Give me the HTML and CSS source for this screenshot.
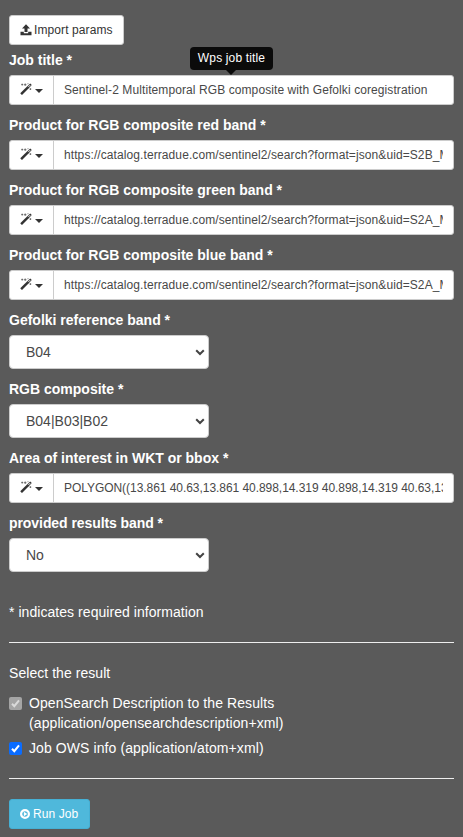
FILE: index.html
```html
<!DOCTYPE html>
<html lang="en">
<head>
<meta charset="utf-8">
<title>Job parameters</title>
<link rel="stylesheet" href="styles.css">
</head>
<body>
<svg class="defs" width="0" height="0" aria-hidden="true">
  <symbol id="wand" viewBox="0 0 12 12">
    <path d="M1.1 11.2 7.9 4.4" stroke="currentColor" stroke-width="2.4"/>
    <path d="M7.7 4.6 11 1.3" stroke="currentColor" stroke-width="2.2"/>
    <path d="M8.3 4 10.3 2" stroke="#fff" stroke-width=".9"/>
    <path d="M2.2.6v2M1.2 1.6h2M5.2.4v2.6M3.9 1.7h2.6M8 .2v1M10.4 5.2v1.8M9.5 6.1h1.8" stroke="currentColor" stroke-width=".6"/>
  </symbol>
  <symbol id="chevron" viewBox="0 0 10 7"><path d="M1.2 1.2 5 5l3.8-3.8" fill="none" stroke="currentColor" stroke-width="2"/></symbol>
</svg>
<form class="job-form">
  <button type="button" class="btn btn-default"><svg class="upload" viewBox="0 0 12 12"><path d="M6 .3 10 4.5H7.5V8h-3V4.5H2zM.5 7.8h3.3v1.4h4.4V7.8h3.3v3.4H.5z" fill="currentColor"/></svg><span class="import-text">Import params</span></button>

  <div class="group">
    <label class="label" for="title">Job title *</label>
    <div class="input-group">
      <button type="button" class="addon"><svg class="wand"><use href="#wand"/></svg><i class="caret"></i></button>
      <input id="title" class="input" value="Sentinel-2 Multitemporal RGB composite with Gefolki coregistration">
      <div class="tooltip">Wps job title</div>
    </div>
  </div>
  <div class="group">
    <label class="label" for="red">Product for RGB composite red band *</label>
    <div class="input-group">
      <button type="button" class="addon"><svg class="wand"><use href="#wand"/></svg><i class="caret"></i></button>
      <input id="red" class="input" value="https://catalog.terradue.com/sentinel2/search?format=json&amp;uid=S2B_MSIL1C">
    </div>
  </div>
  <div class="group">
    <label class="label" for="green">Product for RGB composite green band *</label>
    <div class="input-group">
      <button type="button" class="addon"><svg class="wand"><use href="#wand"/></svg><i class="caret"></i></button>
      <input id="green" class="input" value="https://catalog.terradue.com/sentinel2/search?format=json&amp;uid=S2A_MSIL1C">
    </div>
  </div>
  <div class="group">
    <label class="label" for="blue">Product for RGB composite blue band *</label>
    <div class="input-group">
      <button type="button" class="addon"><svg class="wand"><use href="#wand"/></svg><i class="caret"></i></button>
      <input id="blue" class="input" value="https://catalog.terradue.com/sentinel2/search?format=json&amp;uid=S2A_MSIL1C">
    </div>
  </div>
  <div class="group">
    <label class="label" for="ref">Gefolki reference band *</label>
    <div class="select-box"><select id="ref" class="select"><option>B04</option></select><svg class="chevron"><use href="#chevron"/></svg></div>
  </div>
  <div class="group">
    <label class="label" for="rgb">RGB composite *</label>
    <div class="select-box"><select id="rgb" class="select"><option>B04|B03|B02</option></select><svg class="chevron"><use href="#chevron"/></svg></div>
  </div>
  <div class="group">
    <label class="label" for="aoi">Area of interest in WKT or bbox *</label>
    <div class="input-group">
      <button type="button" class="addon"><svg class="wand"><use href="#wand"/></svg><i class="caret"></i></button>
      <input id="aoi" class="input input-coords" value="POLYGON((13.861 40.63,13.861 40.898,14.319 40.898,14.319 40.63,13.861 40.63))">
    </div>
  </div>
  <div class="group">
    <label class="label label-results" for="results">provided results band *</label>
    <div class="select-box"><select id="results" class="select"><option>No</option></select><svg class="chevron"><use href="#chevron"/></svg></div>
  </div>

  <p class="note">* indicates required information</p>
  <hr class="rule">
  <p class="heading">Select the result</p>
  <div class="check">
    <svg class="box box-disabled" viewBox="0 0 13 13"><rect width="13" height="13" rx="2"/><path d="M3 6.8 5.3 9.2 10 3.3"/></svg>
    <span>OpenSearch Description to the Results<br>(application/opensearchdescription+xml)</span>
  </div>
  <div class="check">
    <svg class="box" viewBox="0 0 13 13"><rect width="13" height="13" rx="2"/><path d="M3 6.8 5.3 9.2 10 3.3"/></svg>
    <span>Job OWS info (application/atom+xml)</span>
  </div>
  <hr class="rule rule-last">
  <button type="button" class="btn btn-info"><svg class="play" viewBox="0 0 10 10"><circle cx="5" cy="5" r="3.9" fill="none" stroke="currentColor" stroke-width="2.2"/><path d="M3.9 2.8 7.2 5 3.9 7.2z" fill="currentColor"/></svg><span>Run Job</span></button>
</form>
</body>
</html>
```

FILE: styles.css
```css
* { box-sizing: border-box; }
body {
  margin: 0;
  background: #5a5a5a;
  color: #fff;
  font: 14px/20px "Liberation Sans", Arial, sans-serif;
  overflow: hidden;
}
button, input, select { font-family: inherit; margin: 0; }
.defs { position: absolute; }
.job-form { padding: 15px 9px 8px; }
.btn {
  display: flex;
  align-items: center;
  height: 30px;
  padding: 0 10px;
  border: 1px solid #ccc;
  border-radius: 3px;
  font-size: 12px;
  line-height: 18px;
  letter-spacing: .1px;
  white-space: nowrap;
}
.btn-default { width: 115px; margin-bottom: 5px; background: #fff; color: #333; }
.btn-info { width: 81px; background: #4fb8db; border-color: #46b0d4; color: #fff; }
.upload { width: 12px; height: 12px; margin-right: 2px; flex: none; }
.play { width: 10px; height: 10px; margin-right: 3px; flex: none; }
.group { margin-bottom: 10px; }
.label { display: block; margin-bottom: 5px; font-weight: bold; white-space: nowrap; }
.label-results { letter-spacing: -.07px; }
.input-group { position: relative; display: flex; width: 445px; height: 30px; }
.addon {
  display: flex;
  align-items: center;
  width: 45px;
  padding: 0 0 0 10px;
  border: 1px solid #ccc;
  border-radius: 3px 0 0 3px;
  background: #fff;
  color: #333;
}
.wand { width: 12px; height: 12px; margin-top: -2px; }
.caret {
  width: 0;
  margin: 1px 0 0 3px;
  border: 4px solid transparent;
  border-top-color: #333;
  border-bottom: 0;
}
.input {
  flex: 1;
  min-width: 0;
  height: 30px;
  margin-left: -1px;
  padding: 5px 10px;
  border: 1px solid #ccc;
  border-radius: 0 3px 3px 0;
  background: #fff;
  color: #484848;
  font-size: 12px;
  letter-spacing: .09px;
  outline: 0;
}
.input-coords { letter-spacing: -.05px; }
.tooltip {
  position: absolute;
  left: 181px;
  bottom: 35px;
  width: 83px;
  height: 23px;
  border-radius: 4px;
  background: #0b0b0b;
  font-size: 12px;
  line-height: 22px;
  letter-spacing: .15px;
  text-align: center;
  white-space: nowrap;
}
.tooltip::after {
  content: "";
  position: absolute;
  top: 100%;
  left: 36px;
  border: 5px solid transparent;
  border-top-color: #0b0b0b;
  border-bottom: 0;
}
.select-box { position: relative; width: 200px; height: 34px; }
.select {
  width: 100%;
  height: 34px;
  padding: 0 16px;
  appearance: none;
  border: 1px solid #ccc;
  border-radius: 4px;
  background: #fff;
  color: #484848;
  font-size: 14px;
}
.chevron { position: absolute; right: 4px; top: 14px; width: 10px; height: 7px; color: #444; }
.note { margin: 30px 0 20px; letter-spacing: .05px; }
.rule { height: 1px; margin: 0 0 20px; border: 0; background: #eee; width: 445px; }
.heading { margin: 0 0 10px; letter-spacing: .05px; }
.check { display: flex; gap: 7px; margin-bottom: 5px; letter-spacing: .09px; white-space: nowrap; }
.box { width: 13px; height: 13px; margin-top: 4px; flex: none; fill: #0a6cff; }
.box path { fill: none; stroke: #fff; stroke-width: 2; }
.box-disabled { fill: #a5a5a5; }
.box-disabled path { stroke: #dadada; }
.rule-last { margin-top: 20px; }
```
